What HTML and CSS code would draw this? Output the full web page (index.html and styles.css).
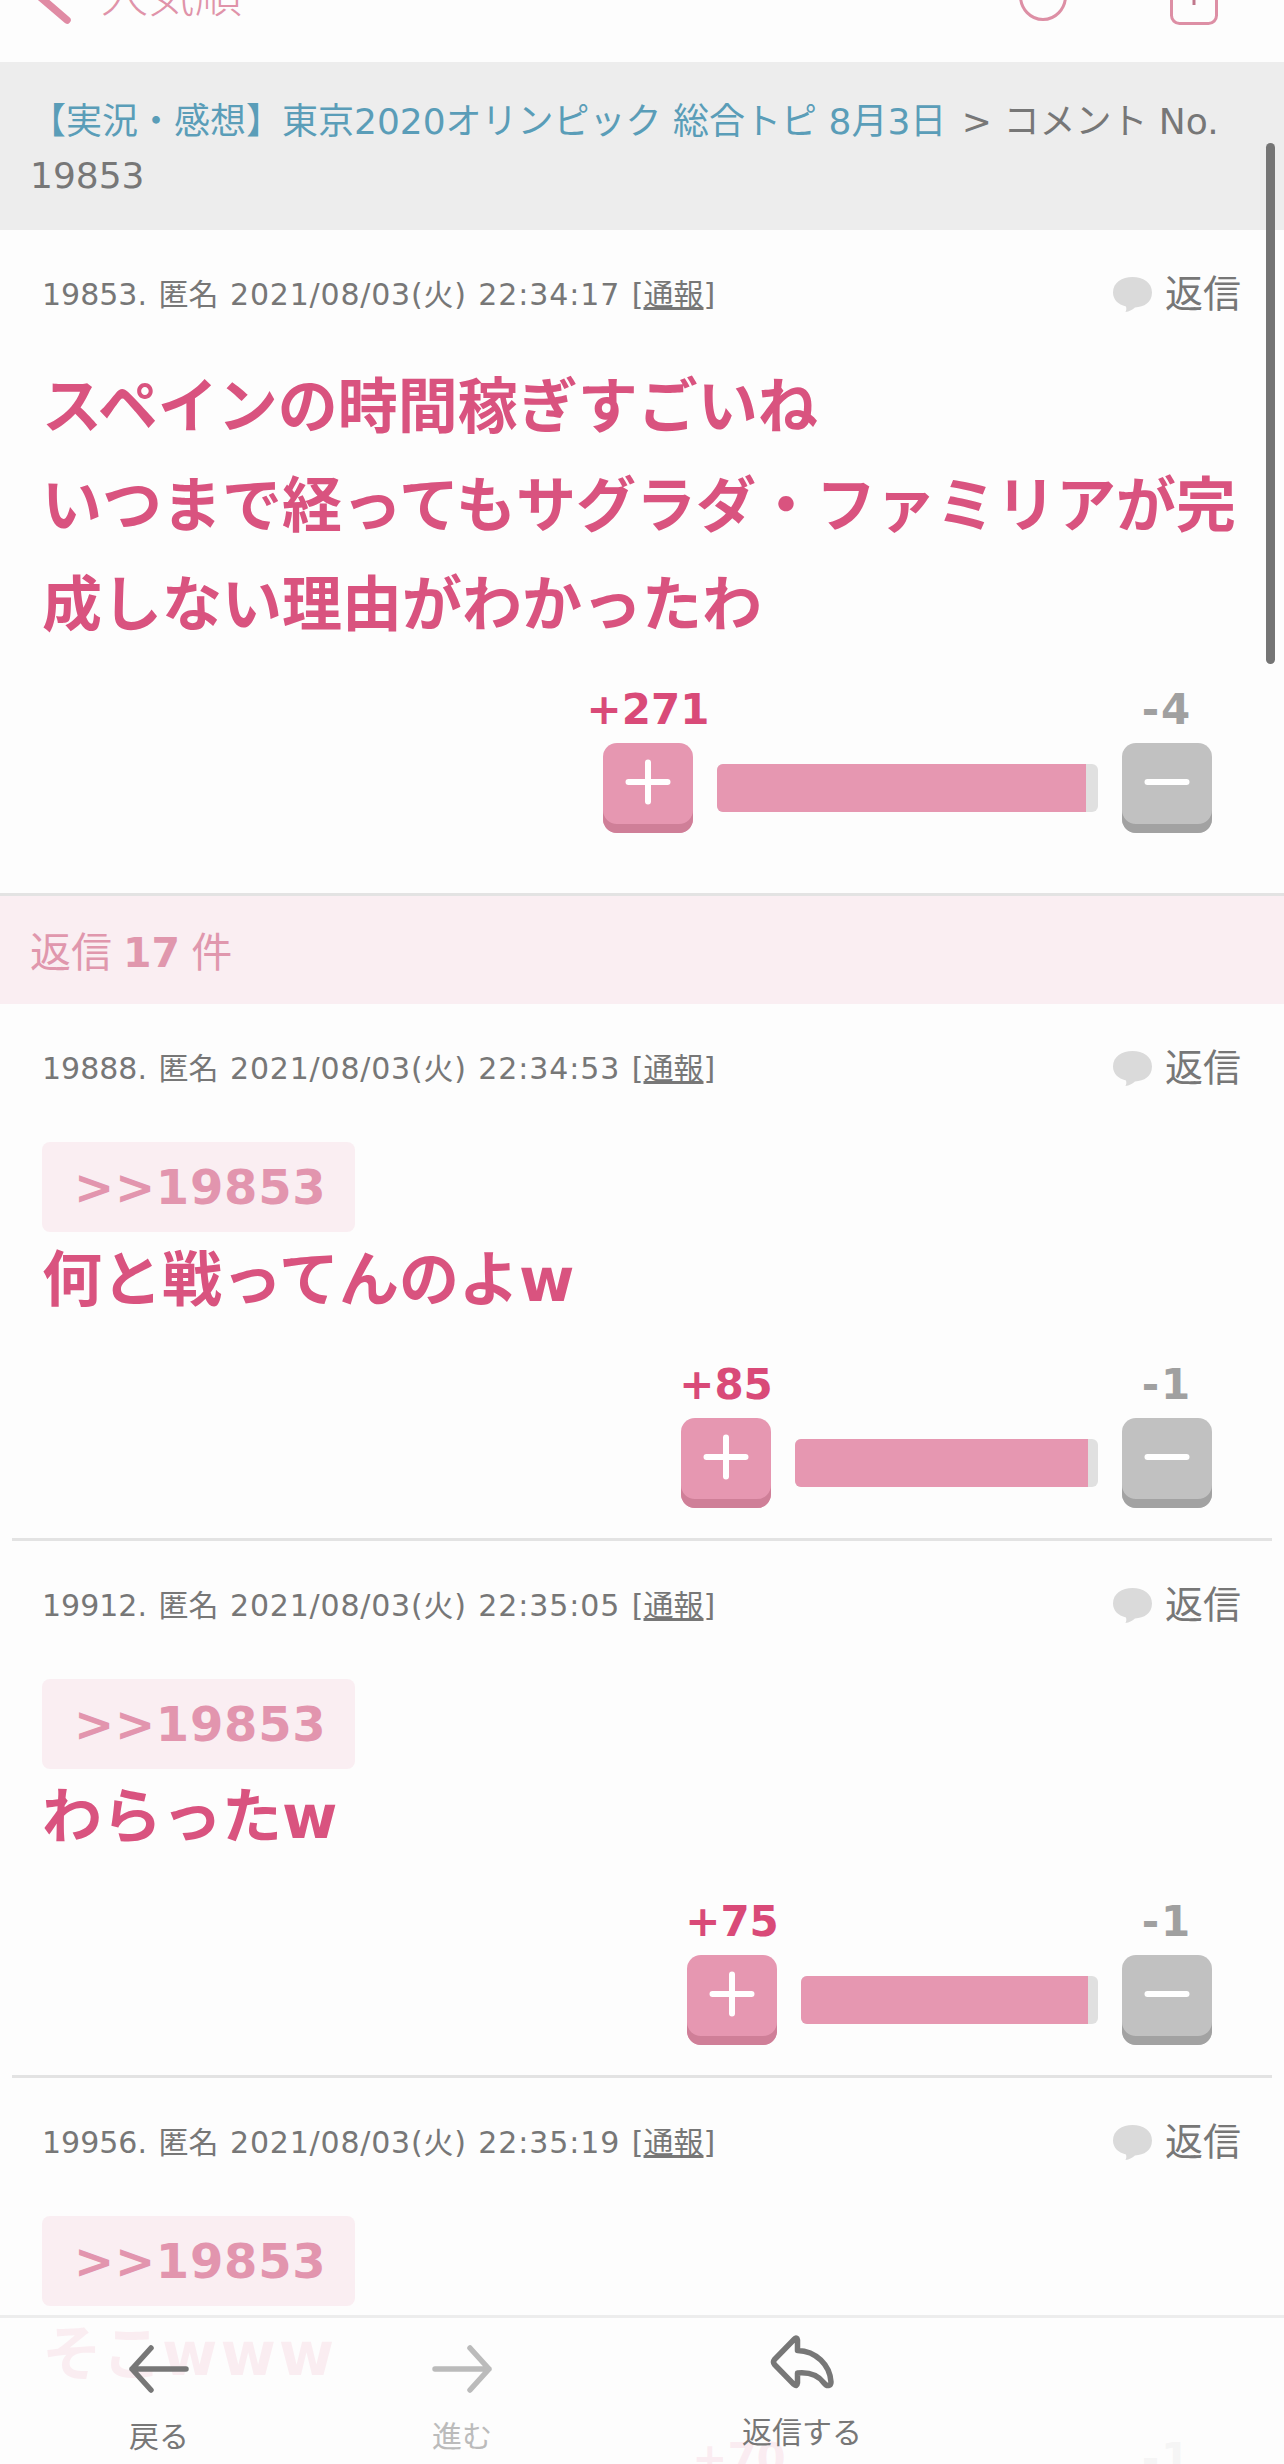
FILE: index.html
```html
<!DOCTYPE html>
<html lang="ja">
<head>
    <meta charset="UTF-8">
    <meta name="viewport" content="width=device-width, initial-scale=1.0">
    <title>コメント No.19853</title>
    <link rel="stylesheet" href="styles.css">
</head>
<body>
    <!-- shared icons -->
    <svg class="sprite">
        <symbol id="bubble" viewBox="0 0 39 35">
            <path d="M19.500 0C30 0 39 5.500 39 15.500S31 30 22 30.500C19 33 16 34.500 12.500 35C13.500 33 13.500 31.500 13 29.500C5 27.500 0 22.500 0 15.500C0 5.500 9 0 19.500 0Z" fill="#dadada"/>
        </symbol>
        <symbol id="plus" viewBox="0 0 46 46">
            <path d="M23 3.500V42.500M3.500 23H42.500" stroke="#fff" stroke-width="6" stroke-linecap="round"/>
        </symbol>
        <symbol id="minus" viewBox="0 0 46 46">
            <path d="M3.500 23H42.500" stroke="#fff" stroke-width="6" stroke-linecap="round"/>
        </symbol>
    </svg>

    <header class="header">
        <svg class="header-back" viewBox="0 0 40 56"><path d="M33 4L5 28L33 52" fill="none" stroke="#e08ba4" stroke-width="7.500" stroke-linecap="round"/></svg>
        <span class="header-title">人気順</span>
        <svg class="header-circle" viewBox="0 0 48 50"><ellipse cx="24" cy="25" rx="22.500" ry="23.500" fill="none" stroke="#dd8fa5" stroke-width="3"/></svg>
        <svg class="header-share" viewBox="0 0 48 58"><rect x="1.500" y="10" width="45" height="46.500" rx="8" fill="none" stroke="#dd8fa5" stroke-width="3"/><path d="M24 2V38" stroke="#c0788c" stroke-width="3"/></svg>
    </header>

    <nav class="breadcrumb">
        <a class="topic-link">【実況・感想】東京2020オリンピック 総合トピ 8月3日</a> &gt; コメント No.<br>19853
    </nav>

    <article class="comment main-comment">
        <div class="comment-head">
            <span class="meta">19853. 匿名 <span class="date">2021/08/03(火)</span> <span class="time">22:34:17</span> [<u>通報</u>]</span>
            <a class="reply"><svg class="bubble"><use href="#bubble"/></svg>返信</a>
        </div>
        <p class="comment-body">スペインの時間稼ぎすごいね<br>いつまで経ってもサグラダ・ファミリアが完<br>成しない理由がわかったわ</p>
        <div class="votes">
            <div class="vote plus"><span class="count">+271</span><button class="vote-button"><svg><use href="#plus"/></svg></button></div>
            <div class="bar" style="width: 381px"><div class="bar-fill" style="width: 369px"></div></div>
            <div class="vote minus"><span class="count">-4</span><button class="vote-button"><svg><use href="#minus"/></svg></button></div>
        </div>
    </article>

    <h2 class="reply-count">返信 <b>17</b> 件</h2>

    <section class="replies">
        <article class="comment">
            <div class="comment-head">
                <span class="meta">19888. 匿名 <span class="date">2021/08/03(火)</span> <span class="time">22:34:53</span> [<u>通報</u>]</span>
                <a class="reply"><svg class="bubble"><use href="#bubble"/></svg>返信</a>
            </div>
            <a class="quote">&gt;&gt;19853</a>
            <p class="comment-body">何と戦ってんのよ<span class="w">w</span></p>
            <div class="votes">
                <div class="vote plus"><span class="count">+85</span><button class="vote-button"><svg><use href="#plus"/></svg></button></div>
                <div class="bar" style="width: 303px"><div class="bar-fill" style="width: 293px"></div></div>
                <div class="vote minus"><span class="count">-1</span><button class="vote-button"><svg><use href="#minus"/></svg></button></div>
            </div>
        </article>

        <article class="comment">
            <div class="comment-head">
                <span class="meta">19912. 匿名 <span class="date">2021/08/03(火)</span> <span class="time">22:35:05</span> [<u>通報</u>]</span>
                <a class="reply"><svg class="bubble"><use href="#bubble"/></svg>返信</a>
            </div>
            <a class="quote">&gt;&gt;19853</a>
            <p class="comment-body">わらった<span class="w">w</span></p>
            <div class="votes">
                <div class="vote plus"><span class="count">+75</span><button class="vote-button"><svg><use href="#plus"/></svg></button></div>
                <div class="bar" style="width: 297px"><div class="bar-fill" style="width: 287px"></div></div>
                <div class="vote minus"><span class="count">-1</span><button class="vote-button"><svg><use href="#minus"/></svg></button></div>
            </div>
        </article>

        <article class="comment">
            <div class="comment-head">
                <span class="meta">19956. 匿名 <span class="date">2021/08/03(火)</span> <span class="time">22:35:19</span> [<u>通報</u>]</span>
                <a class="reply"><svg class="bubble"><use href="#bubble"/></svg>返信</a>
            </div>
            <a class="quote">&gt;&gt;19853</a>
            <p class="comment-body">そこ<span class="w">www</span></p>
            <div class="votes">
                <div class="vote plus"><span class="count">+70</span><button class="vote-button"><svg><use href="#plus"/></svg></button></div>
                <div class="bar" style="width: 290px"><div class="bar-fill" style="width: 280px"></div></div>
                <div class="vote minus"><span class="count">-1</span><button class="vote-button"><svg><use href="#minus"/></svg></button></div>
            </div>
        </article>
    </section>

    <footer class="toolbar">
        <a class="tool tool-back">
            <svg viewBox="0 0 60 50"><path d="M57 25H3M22 4L3 25L22 46" fill="none" stroke="currentColor" stroke-width="5.500" stroke-linecap="round" stroke-linejoin="round"/></svg>
            <span>戻る</span>
        </a>
        <a class="tool tool-forward">
            <svg viewBox="0 0 60 50"><path d="M3 25H57M38 4L57 25L38 46" fill="none" stroke="currentColor" stroke-width="5.500" stroke-linecap="round" stroke-linejoin="round"/></svg>
            <span>進む</span>
        </a>
        <a class="tool tool-reply">
            <svg viewBox="0 0 64 54"><path d="M27 3.500Q25.500 2.500 24 4.500L4.500 24.500Q2.500 27 4.500 29.500L24 49.500Q27 52 27.500 48V38C38 37 48 40 54 48C57 52 61 51 61 47C60 30 46 16 27.500 15.500V5Z" fill="none" stroke="currentColor" stroke-width="5.500" stroke-linejoin="round"/></svg>
            <span>返信する</span>
        </a>
    </footer>

    <div class="scrollbar"></div>
</body>
</html>
```
FILE: styles.css
```css
html {
    overflow: hidden;
}
body {
    margin: 0;
    height: 2464px;
    position: relative;
    overflow: hidden;
    background-color: #fdfdfd;
    color: #777;
    font-family: "DejaVu Sans", "Noto Sans CJK JP", sans-serif;
}
p, h2 {
    margin: 0;
}
.sprite {
    display: none;
}

/* Header, scrolled partly out of view */
.header {
    height: 132px;
    margin-top: -70px;
    padding: 0 66px 0 34px;
    box-sizing: border-box;
    display: flex;
    align-items: center;
}
.header-back {
    width: 40px;
    height: 56px;
}
.header-title {
    margin-left: 27px;
    font-size: 47px;
    line-height: 60px;
    font-weight: 300;
    color: #e093a9;
}
.header-circle {
    width: 48px;
    height: 50px;
    margin-left: auto;
}
.header-share {
    width: 48px;
    height: 58px;
    margin-left: 103px;
}

.breadcrumb {
    height: 168px;
    padding: 33px 30px 0;
    box-sizing: border-box;
    background-color: #ededed;
    font-size: 36px;
    line-height: 54px;
    white-space: nowrap;
}
.topic-link {
    margin-right: 4px;
    color: #5a9db8;
}

/* Comments */
.comment {
    padding: 0 30px 30px;
    border-bottom: 3px solid #e3e3e3;
}
.main-comment {
    padding: 0 42px 60px;
}
.comment-head {
    height: 128px;
    display: flex;
    justify-content: space-between;
    align-items: center;
}
.meta {
    padding-top: 2px;
    font-size: 30px;
    line-height: 40px;
    word-spacing: 2px;
}
.date {
    letter-spacing: 0.8px;
}
.time {
    letter-spacing: 0.9px;
}
.reply {
    margin-right: 1px;
    display: flex;
    align-items: center;
    font-size: 38px;
    line-height: 50px;
}
.bubble {
    width: 39px;
    height: 35px;
    margin-right: 13px;
}
.comment-body {
    margin-top: -1px;
    font-size: 60px;
    line-height: 99px;
    font-weight: bold;
    color: #d9537f;
    white-space: nowrap;
}
.main-comment .comment-body {
    margin-top: 0;
}
.w {
    letter-spacing: 3px;
}
.quote {
    display: block;
    width: max-content;
    height: 90px;
    margin-top: 10px;
    padding: 0 29px 0 32px;
    border-radius: 8px;
    background-color: #faeef2;
    color: #e295ae;
    font-size: 48px;
    line-height: 90px;
    font-weight: bold;
    letter-spacing: 0.7px;
}

/* Plus / minus votes */
.votes {
    margin-top: 22px;
    padding-right: 30px;
    display: flex;
    justify-content: flex-end;
    align-items: flex-end;
    gap: 24px;
}
.vote {
    width: 90px;
    display: flex;
    flex-direction: column;
    align-items: center;
}
.count {
    font-size: 42px;
    line-height: 66px;
    font-weight: bold;
    white-space: nowrap;
}
.plus .count {
    color: #d94a78;
}
.minus .count {
    color: #a0a0a0;
    letter-spacing: 2px;
}
.vote-button {
    width: 90px;
    height: 90px;
    padding: 0 0 12px;
    border: none;
    border-radius: 14px;
    display: flex;
    justify-content: center;
    align-items: center;
}
.vote-button svg {
    width: 46px;
    height: 46px;
}
.plus .vote-button {
    background-color: #e697b1;
    box-shadow: inset 0 -9px 0 #cf7f98;
}
.minus .vote-button {
    background-color: #c1c1c1;
    box-shadow: inset 0 -9px 0 #a2a2a2;
}
.bar {
    height: 48px;
    margin-bottom: 21px;
    border-radius: 6px;
    overflow: hidden;
    background-color: #e0e0e0;
}
.bar-fill {
    height: 100%;
    background-color: #e697b1;
}

.reply-count {
    height: 108px;
    padding: 0 30px;
    background-color: #faeef2;
    color: #e097ad;
    font-size: 41px;
    line-height: 114px;
    font-weight: normal;
    word-spacing: -2px;
}
.replies {
    margin: 0 12px;
}

/* Bottom toolbar */
.toolbar {
    position: absolute;
    left: 0;
    right: 0;
    bottom: 0;
    height: 149px;
    box-sizing: border-box;
    border-top: 3px solid #ededed;
    background-color: rgba(253, 253, 253, 0.91);
    display: flex;
    font-size: 30px;
    line-height: 40px;
}
.tool {
    display: flex;
    flex-direction: column;
    align-items: center;
}
.tool svg {
    width: 60px;
    height: 50px;
    margin: 26px 0 23px;
}
.tool-back {
    width: 318px;
}
.tool-back, .tool-reply {
    color: #777;
}
.tool-forward {
    width: 288px;
    color: #bbb;
}
.tool-reply {
    width: 392px;
}
.tool-reply svg {
    width: 64px;
    height: 54px;
    margin: 17px 0 24px;
}

.scrollbar {
    position: absolute;
    top: 143px;
    right: 9px;
    width: 9px;
    height: 521px;
    border-radius: 5px;
    background-color: #757575;
}
```
